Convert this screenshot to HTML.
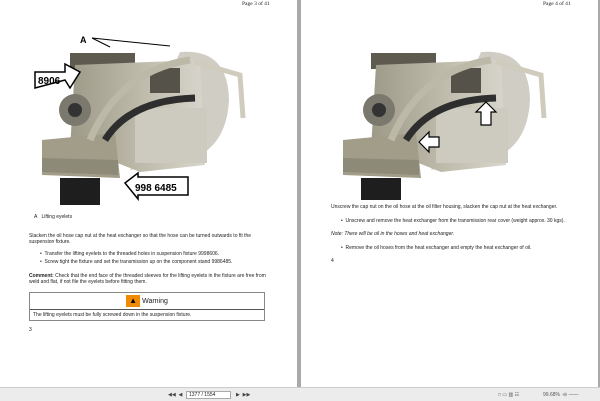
<!DOCTYPE html>
<html><head><style>
*{margin:0;padding:0;box-sizing:border-box}
body{width:600px;height:401px;background:#a9a9a9;position:relative;overflow:hidden;font-family:"Liberation Sans",sans-serif;color:#222}
.pg{position:absolute;top:0;height:387px;background:#fff}
.t{position:absolute;font-size:5px;line-height:6px;white-space:nowrap}
.hd{position:absolute;font-family:"Liberation Serif",serif;font-size:5.5px}
.tb{position:absolute;left:0;top:387px;width:600px;height:14px;background:#ececec;border-top:1px solid #ccc}
</style></head><body>
<div class="pg" style="left:0;width:297px">
<div class="hd" style="left:242px;top:1px">Page 3 of 41</div>
<svg style="position:absolute;left:0;top:0" width="297" height="205">
<defs><linearGradient id="g" x1="0" x2="1"><stop offset="0" stop-color="#9e9a88"/><stop offset=".6" stop-color="#c2bfb0"/><stop offset="1" stop-color="#d8d6cc"/></linearGradient></defs>
<path d="M180 52 Q228 48 229 100 Q227 140 200 155 L130 170 Z" fill="#cfcdc4"/>
<rect x="70" y="53" width="65" height="16" fill="#5e5a50"/>
<path d="M75 65 L200 60 L205 165 L140 172 L110 160 L70 150 Z" fill="url(#g)"/>
<rect x="135" y="108" width="72" height="55" fill="#cdcbc0"/>
<rect x="150" y="68" width="30" height="25" fill="#55524a"/>
<path d="M42 140 L115 133 L120 178 L42 175 Z" fill="#a29d88"/>
<path d="M42 158 L118 160 L118 175 L42 172 Z" fill="#8e8a78"/>
<circle cx="75" cy="110" r="16" fill="#7b786e"/><circle cx="75" cy="110" r="7" fill="#333"/>
<path d="M90 140 Q120 70 190 60" stroke="#bdb9a8" stroke-width="7" fill="none"/>
<path d="M105 140 Q130 100 195 98" stroke="#2e2e2e" stroke-width="7" fill="none"/>
<path d="M195 62 L240 75 L243 118" stroke="#d0ccbd" stroke-width="5" fill="none"/>
<rect x="60" y="178" width="40" height="27" fill="#1e1e1e"/>
<line x1="92" y1="38" x2="110" y2="47" stroke="#000"/><line x1="92" y1="38" x2="170" y2="46" stroke="#000"/>
<text x="80" y="43" font-family="Liberation Sans" font-weight="bold" font-size="9">A</text>
<path d="M35 72 L65 72 L65 64 L80 72 L70 88 L65 80 L35 88 Z" fill="#fff" stroke="#000" stroke-width="1.5"/>
<text x="38" y="84" font-family="Liberation Sans" font-weight="bold" font-size="10">8906</text>
<path d="M125 183 L138 173 L138 177 L188 177 L188 195 L138 195 L138 199 Z" fill="#fff" stroke="#000" stroke-width="1.5"/>
<text x="135" y="191" font-family="Liberation Sans" font-weight="bold" font-size="10">998 6485</text>
</svg>
<div class="t" style="left:34px;top:214px">A&nbsp;&nbsp;&nbsp;Lifting eyelets</div>
<div class="t" style="left:29px;top:233px">Slacken the oil hose cap nut at the heat exchanger so that the hose can be turned outwards to fit the<br>suspension fixture.</div>
<div class="t" style="left:40px;top:251px">•&nbsp; Transfer the lifting eyelets to the threaded holes in suspension fixture 9998606.</div>
<div class="t" style="left:40px;top:259px">•&nbsp; Screw tight the fixture and set the transmission up on the component stand 9986485.</div>
<div class="t" style="left:29px;top:273px"><b>Comment:</b> Check that the end face of the threaded sleeves for the lifting eyelets in the fixture are free from<br>weld and flat, if not file the eyelets before fitting them.</div>
<div style="position:absolute;left:29px;top:292px;width:236px;height:29px;border:1px solid #888">
<div style="height:17px;border-bottom:1px solid #555;text-align:center;font-size:7px;line-height:17px"><span style="display:inline-block;width:14px;height:12px;background:#f08a00;vertical-align:middle;margin-right:2px;color:#000;font-size:8px;line-height:12px">▲</span>Warning</div>
<div class="t" style="left:3px;top:19px">The lifting eyelets must be fully screwed down in the suspension fixture.</div></div>
<div class="t" style="left:29px;top:327px">3</div>
</div>
<div class="pg" style="left:301px;width:297px">
<div class="hd" style="left:242px;top:1px">Page 4 of 41</div>
<svg style="position:absolute;left:0;top:0" width="297" height="200">
<defs><linearGradient id="h" x1="0" x2="1"><stop offset="0" stop-color="#9e9a88"/><stop offset=".6" stop-color="#c2bfb0"/><stop offset="1" stop-color="#d8d6cc"/></linearGradient></defs>
<path d="M180 52 Q228 48 229 100 Q227 140 200 155 L130 170 Z" fill="#cfcdc4"/>
<rect x="70" y="53" width="65" height="16" fill="#5e5a50"/>
<path d="M75 65 L200 60 L205 165 L140 172 L110 160 L70 150 Z" fill="url(#h)"/>
<rect x="135" y="108" width="72" height="55" fill="#cdcbc0"/>
<rect x="150" y="68" width="30" height="25" fill="#55524a"/>
<path d="M42 140 L115 133 L120 178 L42 175 Z" fill="#a29d88"/>
<path d="M42 158 L118 160 L118 175 L42 172 Z" fill="#8e8a78"/>
<circle cx="78" cy="110" r="16" fill="#7b786e"/><circle cx="78" cy="110" r="7" fill="#333"/>
<path d="M90 140 Q120 70 190 60" stroke="#bdb9a8" stroke-width="7" fill="none"/>
<path d="M105 140 Q130 100 195 98" stroke="#2e2e2e" stroke-width="7" fill="none"/>
<path d="M195 62 L240 75 L243 118" stroke="#d0ccbd" stroke-width="5" fill="none"/>
<rect x="60" y="178" width="40" height="22" fill="#1e1e1e"/>
<path d="M185 102 L195 112 L190 112 L190 125 L180 125 L180 112 L175 112 Z" fill="#fff" stroke="#000" stroke-width="1.2"/>
<path d="M118 142 L128 132 L128 137 L138 137 L138 147 L128 147 L128 152 Z" fill="#fff" stroke="#000" stroke-width="1.2"/>
</svg>
<div class="t" style="left:30px;top:204px">Unscrew the cap nut on the oil hose at the oil filter housing, slacken the cap nut at the heat exchanger.</div>
<div class="t" style="left:40px;top:218px">•&nbsp; Unscrew and remove the heat exchanger from the transmission rear cover (weight approx. 30 kgs).</div>
<div class="t" style="left:30px;top:231px;font-style:italic">Note: There will be oil in the hoses and heat exchanger.</div>
<div class="t" style="left:40px;top:245px">•&nbsp; Remove the oil hoses from the heat exchanger and empty the heat exchanger of oil.</div>
<div class="t" style="left:30px;top:258px">4</div>
</div>
<div class="tb">
<div class="t" style="left:168px;top:4px;color:#444">◀◀ &nbsp;◀</div>
<div class="t" style="left:186px;top:3px;width:45px;height:8px;background:#fff;border:1px solid #aaa;line-height:7px;padding-left:2px">1377 / 1554</div>
<div class="t" style="left:236px;top:4px;color:#444">▶ &nbsp;▶▶</div>
<div class="t" style="left:498px;top:4px;color:#555">□ ▭ ▥ ☷</div>
<div class="t" style="left:543px;top:4px;color:#555">99.68% ·⊖ ——</div>
</div>
</body></html>
